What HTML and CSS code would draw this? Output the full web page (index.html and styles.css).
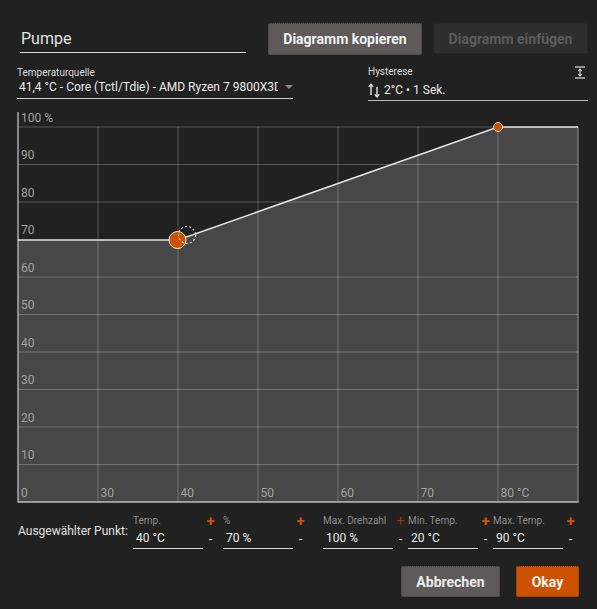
FILE: index.html
```html
<!DOCTYPE html>
<html lang="de">
<head>
<meta charset="utf-8">
<title>Pumpe</title>
<link rel="stylesheet" href="styles.css">
</head>
<body>
<div class="page">
  <div class="top">
    <div class="name">Pumpe</div>
    <button class="btn btn-copy">Diagramm kopieren</button>
    <button class="btn btn-paste">Diagramm einfügen</button>
  </div>
  <div class="row2">
    <div class="source">
      <div class="small-label">Temperaturquelle</div>
      <div class="select">
        <span class="select-text">41,4 °C - Core (Tctl/Tdie) - AMD Ryzen 7 9800X3D</span>
        <span class="caret"></span>
      </div>
    </div>
    <div class="hyst">
      <div class="hyst-head">
        <span class="small-label">Hysterese</span>
        <svg class="expand" width="12" height="13" viewBox="0 0 12 13">
          <line x1="1" y1="1" x2="11" y2="1" stroke="#ddd" stroke-width="1.2"/>
          <line x1="1" y1="12" x2="11" y2="12" stroke="#ddd" stroke-width="1.2"/>
          <line x1="6" y1="3.5" x2="6" y2="9.5" stroke="#ddd" stroke-width="1.2"/>
          <path d="M4.2 5 L6 3 L7.8 5" fill="none" stroke="#ddd" stroke-width="1.1"/>
          <path d="M4.2 8 L6 10 L7.8 8" fill="none" stroke="#ddd" stroke-width="1.1"/>
        </svg>
      </div>
      <div class="hyst-value">
        <svg class="updown" width="12" height="15" viewBox="0 0 12 15">
          <line x1="3" y1="1.5" x2="3" y2="12" stroke="#e6e6e6" stroke-width="1.4"/>
          <path d="M0.8 3.8 L3 1.2 L5.2 3.8" fill="none" stroke="#e6e6e6" stroke-width="1.3"/>
          <line x1="9" y1="4" x2="9" y2="14" stroke="#e6e6e6" stroke-width="1.4"/>
          <path d="M6.8 11.4 L9 14 L11.2 11.4" fill="none" stroke="#e6e6e6" stroke-width="1.3"/>
        </svg>
        <span>2°C • 1 Sek.</span>
      </div>
    </div>
  </div>
  <svg class="chart" width="597" height="400" viewBox="0 105 597 400">
    <polygon points="18,240 178,240 498,127 578,127 578,502 18,502" fill="#474747"/>
    <g stroke="rgba(255,255,255,0.24)" stroke-width="1">
      <line x1="18" y1="127" x2="578" y2="127"/>
      <line x1="18" y1="164.5" x2="578" y2="164.5"/>
      <line x1="18" y1="202" x2="578" y2="202"/>
      <line x1="18" y1="277" x2="578" y2="277"/>
      <line x1="18" y1="314.5" x2="578" y2="314.5"/>
      <line x1="18" y1="352" x2="578" y2="352"/>
      <line x1="18" y1="389.5" x2="578" y2="389.5"/>
      <line x1="18" y1="427" x2="578" y2="427"/>
      <line x1="18" y1="464.5" x2="578" y2="464.5"/>
      <line x1="98" y1="127" x2="98" y2="502"/>
      <line x1="178" y1="127" x2="178" y2="502"/>
      <line x1="258" y1="127" x2="258" y2="502"/>
      <line x1="338" y1="127" x2="338" y2="502"/>
      <line x1="418" y1="127" x2="418" y2="502"/>
      <line x1="498" y1="127" x2="498" y2="502"/>
    </g>
    <line x1="578" y1="127" x2="578" y2="502" stroke="#8a8a8a" stroke-width="1.2"/>
    <line x1="18" y1="112" x2="18" y2="502.5" stroke="#a8a8a8" stroke-width="1.5"/>
    <line x1="18" y1="502" x2="578.5" y2="502" stroke="#bdbdbd" stroke-width="1.5"/>
    <polyline points="18,240 178,240 498,127 578,127" fill="none" stroke="#e4e4e4" stroke-width="1.5"/>
    <g class="axis-label" fill="#a2a2a2" font-size="12">
      <text x="21" y="121.5">100 %</text>
      <text x="21" y="159">90</text>
      <text x="21" y="196.5">80</text>
      <text x="21" y="234">70</text>
      <text x="21" y="271.5">60</text>
      <text x="21" y="309">50</text>
      <text x="21" y="346.5">40</text>
      <text x="21" y="384">30</text>
      <text x="21" y="421.5">20</text>
      <text x="21" y="459">10</text>
      <text x="21" y="496.5">0</text>
      <text x="100.5" y="496.5">30</text>
      <text x="180.5" y="496.5">40</text>
      <text x="260.5" y="496.5">50</text>
      <text x="340.5" y="496.5">60</text>
      <text x="420.5" y="496.5">70</text>
      <text x="500.5" y="496.5">80 °C</text>
    </g>
    <circle cx="177.5" cy="240" r="8.5" fill="#cc5200" stroke="#f0f0f0" stroke-width="1"/>
    <circle cx="187" cy="235" r="8.5" fill="none" stroke="#f0f0f0" stroke-width="1.1" stroke-dasharray="2 2.2"/>
    <circle cx="498" cy="127" r="4.5" fill="#cc5200" stroke="#dcdcdc" stroke-width="1"/>
  </svg>
  <div class="point-row">
    <div class="point-title">Ausgewählter Punkt:</div>
    <div class="field">
      <div class="field-label">Temp.</div>
      <div class="field-input">40 °C</div>
    </div>
    <div class="pm"><span class="plus">+</span><span class="minus">-</span></div>
    <div class="field gap5">
      <div class="field-label">%</div>
      <div class="field-input">70 %</div>
    </div>
    <div class="pm"><span class="plus">+</span><span class="minus">-</span></div>
    <div class="field gap15">
      <div class="field-label">Max. Drehzahl</div>
      <div class="field-input">100 %</div>
    </div>
    <div class="pm"><span class="plus dim">+</span><span class="minus">-</span></div>
    <div class="field">
      <div class="field-label">Min. Temp.</div>
      <div class="field-input">20 °C</div>
    </div>
    <div class="pm"><span class="plus">+</span><span class="minus">-</span></div>
    <div class="field">
      <div class="field-label">Max. Temp.</div>
      <div class="field-input">90 °C</div>
    </div>
    <div class="pm"><span class="plus">+</span><span class="minus">-</span></div>
  </div>
  <div class="actions">
    <button class="btn btn-cancel">Abbrechen</button>
    <button class="btn btn-ok">Okay</button>
  </div>
</div>
</body>
</html>
```
FILE: styles.css
```css
* { box-sizing: border-box; }
html, body {
  margin: 0;
  padding: 0;
  background: #212121;
  width: 597px;
  height: 609px;
  overflow: hidden;
}
body {
  font-family: Roboto, "Liberation Sans", Arial, sans-serif;
  color: #e6e6e6;
}
.page {
  padding-top: 23px;
}
.top {
  display: flex;
  height: 32px;
}
.name {
  margin-left: 20px;
  width: 226px;
  height: 30px;
  padding: 6px 0 0 1px;
  font-size: 16px;
  line-height: 20px;
  color: #e2e2e2;
  border-bottom: 1.5px solid #d8d8d8;
}
.btn {
  font-family: Roboto, "Liberation Sans", Arial, sans-serif;
  font-weight: 700;
  font-size: 14px;
  border: 1px dotted rgba(0,0,0,0.35);
  border-radius: 2px;
  padding: 0;
  height: 32px;
  cursor: pointer;
}
.btn-copy {
  margin-left: 22px;
  width: 154px;
  background: #5e5a5a;
  color: #f2f2f2;
}
.btn-paste {
  margin-left: 11px;
  width: 155px;
  height: 31px;
  background: #2e2e2e;
  color: #5c5c5c;
}
.row2 {
  display: flex;
  height: 50px;
  align-items: flex-start;
}
.small-label {
  font-size: 10px;
  line-height: 12px;
  color: #dcdcdc;
}
.source {
  margin-left: 17px;
  width: 276px;
  padding-top: 12px;
  padding-bottom: 3px;
  border-bottom: 1px solid #cfcfcf;
}
.select {
  display: flex;
  align-items: center;
  height: 16px;
}
.select-text {
  display: block;
  width: 259px;
  margin-left: 2px;
  overflow: hidden;
  white-space: nowrap;
  font-size: 12px;
  line-height: 16px;
  color: #ececec;
}
.caret {
  margin-left: 7px;
  width: 0;
  height: 0;
  border-left: 4px solid transparent;
  border-right: 4px solid transparent;
  border-top: 4px solid #8a8a8a;
}
.hyst {
  margin-left: 75px;
  width: 220px;
  padding-top: 11px;
  padding-bottom: 2px;
  border-bottom: 1px solid #bdbdbd;
}
.hyst-head {
  display: flex;
  justify-content: space-between;
  align-items: flex-start;
  height: 12px;
}
.expand {
  margin-right: 2px;
}
.hyst-value {
  margin-top: 4px;
  display: flex;
  align-items: center;
  height: 16px;
  font-size: 12px;
  line-height: 16px;
  color: #e8e8e8;
}
.updown {
  margin-right: 4px;
  margin-top: 1px;
}
.chart {
  display: block;
}
.axis-label text {
  font-family: Roboto, "Liberation Sans", Arial, sans-serif;
}
.point-row {
  display: flex;
  align-items: flex-start;
  height: 44px;
}
.point-title {
  margin-left: 18px;
  width: 115px;
  margin-top: 18px;
  font-size: 12px;
  line-height: 16px;
  color: #e0e0e0;
  white-space: nowrap;
}
.field {
  width: 70px;
  padding-top: 10px;
}
.gap5 { margin-left: 5px; }
.gap15 { margin-left: 15px; }
.field-label {
  font-size: 10px;
  line-height: 12px;
  color: #8e8e8e;
  white-space: nowrap;
}
.field-input {
  margin-top: 3px;
  padding: 0 0 2px 3px;
  font-size: 12px;
  line-height: 16px;
  color: #ececec;
  border-bottom: 1px solid #d8d8d8;
}
.pm {
  width: 15px;
  padding-top: 9px;
  display: flex;
  flex-direction: column;
  align-items: center;
}
.plus {
  font-size: 15px;
  line-height: 14px;
  font-weight: 700;
  color: #d25400;
}
.plus.dim {
  color: rgba(210, 84, 0, 0.55);
  font-weight: 400;
}
.minus {
  margin-top: 3px;
  font-size: 13px;
  line-height: 16px;
  color: #e0e0e0;
}
.actions {
  display: flex;
  justify-content: flex-end;
  padding-right: 18px;
  margin-top: 17px;
}
.btn-cancel {
  width: 99px;
  height: 31px;
  background: #5e5a5a;
  color: #ececec;
  margin-right: 16px;
}
.btn-ok {
  width: 63px;
  height: 31px;
  background: #cc5200;
  color: #f2f2f2;
}
```
